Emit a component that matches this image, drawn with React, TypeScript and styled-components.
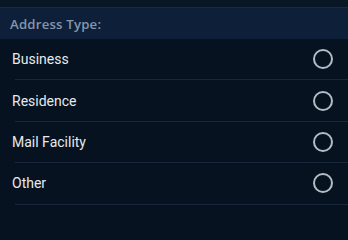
import { FC, useState } from 'react';
import styled, { createGlobalStyle } from 'styled-components';

const Global = createGlobalStyle`
  html, body {
    margin: 0;
    padding: 0;
    background: #06121f;
  }
`;

const Page = styled.div`
  width: 348px;
  height: 208px;
  overflow: hidden;
  background: #06121f;
`;

const TopBar = styled.div`
  height: 7px;
  background: #081626;
  border-bottom: 1px solid #1b2b3d;
`;

const Header = styled.div`
  height: 31px;
  display: flex;
  align-items: center;
  padding: 0 10px;
  background: #0e2039;
  color: #8596ab;
  font: 600 13.2px 'Open Sans', sans-serif;
  letter-spacing: 0.2px;
`;

const List = styled.ul`
  list-style: none;
  margin: 0;
  padding: 0 0 0 15px;
`;

const Row = styled.li`
  height: 40.4px;
  display: flex;
  align-items: center;
  justify-content: space-between;
  padding-right: 15px;
  border-bottom: 1px solid #18283a;
  cursor: pointer;
`;

const Label = styled.span`
  margin-left: -3px;
  color: #e6eaee;
  font: 400 14px Roboto, sans-serif;
`;

const Radio = styled.span<{ $checked: boolean }>`
  width: 16px;
  height: 16px;
  border-radius: 50%;
  border: 2px solid #b4bcc5;
  display: flex;
  align-items: center;
  justify-content: center;
  &::after {
    content: '';
    width: 10px;
    height: 10px;
    border-radius: 50%;
    background: ${(p) => (p.$checked ? '#b4bcc5' : 'transparent')};
  }
`;

const types = ['Business', 'Residence', 'Mail Facility', 'Other'];

const App: FC = () => {
  const [selected, setSelected] = useState<string | null>(null);
  return (
    <Page>
      <Global />
      <TopBar />
      <Header>Address Type:</Header>
      <List>
        {types.map((t) => (
          <Row key={t} onClick={() => setSelected(t)}>
            <Label>{t}</Label>
            <Radio $checked={selected === t} />
          </Row>
        ))}
      </List>
    </Page>
  );
};

export default App;
